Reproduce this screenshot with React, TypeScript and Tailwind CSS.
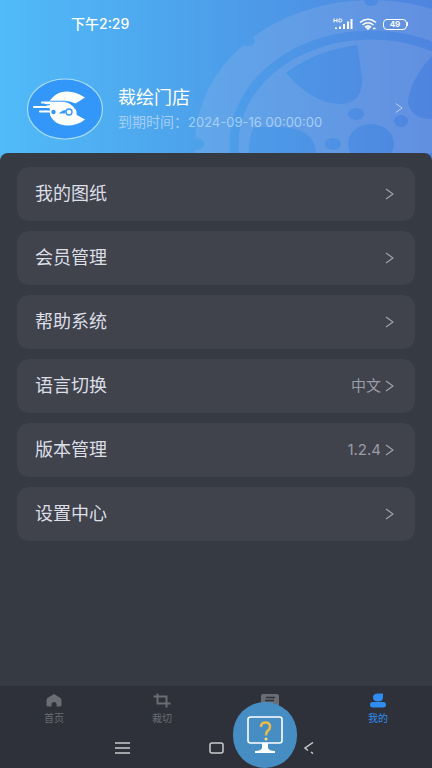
import React, { useState } from "react";

const menuItems = [
  { id: "drawings", label: "我的图纸", value: "" },
  { id: "member", label: "会员管理", value: "" },
  { id: "help", label: "帮助系统", value: "" },
  { id: "language", label: "语言切换", value: "中文" },
  { id: "version", label: "版本管理", value: "1.2.4" },
  { id: "settings", label: "设置中心", value: "" },
];

function Chevron({ className }: { className: string }) {
  return (
    <svg viewBox="0 0 9 12" className={className} fill="none" stroke="currentColor" strokeWidth="1.1" aria-hidden="true">
      <path d="M1 1 L8 6 L1 11" />
    </svg>
  );
}

// Car wheel drawn behind the profile header
function Wheel() {
  return (
    <svg viewBox="0 0 240 153" className="absolute right-0 top-0 w-60" aria-hidden="true">
      <defs>
        <mask id="wheel">
          <ellipse cx="179" cy="144" rx="176" ry="144" fill="#fff" />
          <ellipse cx="179" cy="144" rx="137" ry="109" fill="none" stroke="#000" strokeWidth="9" />
          <g fill="#000">
            <ellipse cx="179" cy="1" rx="7" ry="5" />
            <ellipse cx="56" cy="41" rx="7" ry="5" />
            <ellipse cx="5" cy="144" rx="7" ry="6" />
            <path d="M94 73 Q122 51 165 45 Q168 60 170 80 Q170 104 147 104 Q120 103 94 73 Z" />
            <path d="M57 153 Q57 139 61 128 Q86 124 107 130 Q124 137 124 153 Z" />
            <path d="M240 56 Q218 80 216 102 Q219 119 240 119 Z" />
            <ellipse cx="164" cy="114" rx="8" ry="6" />
            <ellipse cx="209" cy="121" rx="7" ry="6" />
            <ellipse cx="141" cy="144" rx="8" ry="6" />
            <ellipse cx="179" cy="144" rx="23" ry="20" />
          </g>
        </mask>
      </defs>
      <rect width="240" height="153" fill="#b4bee8" fillOpacity="0.2" mask="url(#wheel)" />
    </svg>
  );
}

function Logo() {
  return (
    <svg viewBox="0 0 78 62" className="h-[62px] w-[78px] shrink-0" role="img" aria-label="裁绘">
      <ellipse cx="39" cy="31" rx="37.5" ry="30" fill="#3297f8" stroke="#a9ddfb" strokeWidth="1.2" />
      {/* letter C with the car running through it */}
      <path
        d="M59 19.500 C53 15.500 47 13.500 41 13.500 C33 13.500 27 17.500 23.500 23.500 L24 37 C27 44 34 47.500 41 47.500 C48 47.500 54 45.500 59 41.500 L50 36.500 L26 36 V23.500 H44 L49.500 25.500 Z"
        fill="#fff"
      />
      <path d="M17 24 H38 C43 24.500 47 27.500 49 31 Q51 32 50.500 37 H24 V30 Z" fill="#fff" />
      <path d="M16 24.500 H36 M8 29 H30 M14 33.500 H26" stroke="#fff" strokeWidth="2.200" strokeLinecap="round" />
      <path d="M16 26.700 H24 M12 31.300 H23" stroke="#3297f8" strokeWidth="1" />
      <path d="M24 23.200 H39 Q43 24 47 26" stroke="#3297f8" strokeWidth="0.900" fill="none" />
      <circle cx="27.500" cy="34" r="2.200" fill="#3297f8" />
      <path d="M33 35.500 Q36 32 40 32 L39 35.500 Z" fill="#3297f8" />
      <circle cx="43" cy="34" r="3" fill="#fff" stroke="#3297f8" strokeWidth="1.400" />
    </svg>
  );
}

function StatusIcons() {
  return (
    <div className="flex items-center gap-1.5 text-white">
      <svg viewBox="0 0 20 12" className="h-3 w-5" fill="none" stroke="currentColor" aria-hidden="true">
        <path d="M1 0.500 V4.500 M4 0.500 V4.500 M1 2.500 H4 M6 1 V4 H7.500 Q9 4 9 2.500 Q9 1 7.500 1 Z" />
        <path d="M3 9.500 V11 M7 8.500 V11 M11 6 V11 M15 3.500 V11 M18.500 1 V11" strokeWidth="2" />
      </svg>
      <svg viewBox="0 0 18 12" className="h-3 w-[18px]" fill="none" stroke="currentColor" strokeWidth="1.600" aria-hidden="true">
        <path d="M1 4.500 Q9 -2 17 4.500 M3.500 7 Q9 2.500 14.500 7 M6 9.200 Q9 6.500 12 9.200" />
        <path d="M8 10 L9 11 L10 10 Z M14 10.500 H16.500" />
      </svg>
      <div className="flex items-center">
        <span className="flex h-[11px] w-6 items-center justify-center rounded border border-white text-[8px] font-bold leading-none">
          49
        </span>
        <span className="h-1 w-px bg-white" />
      </div>
    </div>
  );
}

const tabs = [
  {
    id: "home",
    label: "首页",
    icon: <path d="M9 1 L15.500 5 Q16.500 6 16.500 7.500 V12 Q16.500 13.500 15 13.500 H11.500 V11 Q11.500 9 9 9 Q6.500 9 6.500 11 V13.500 H3 Q1.500 13.500 1.500 12 V7.500 Q1.500 6 2.500 5 Z" />,
  },
  {
    id: "crop",
    label: "裁切",
    icon: (
      <path d="M4.500 0.500 V10.500 H17.500 M0.500 3.500 H13.500 V14.500" fill="none" stroke="currentColor" strokeWidth="2" />
    ),
  },
  {
    id: "message",
    label: "消息",
    icon: (
      <>
        <rect x="0" y="1" width="18" height="14" rx="2" />
        <path d="M5 4.500 H14 M4 7.500 H13" stroke="#2e3139" strokeWidth="1.300" />
      </>
    ),
  },
  {
    id: "mine",
    label: "我的",
    icon: (
      <>
        <path d="M4 4.500 Q4 0.500 9 0.500 H14 V4 Q14 8.500 9 8.500 Q4 8.500 4 4.500 Z" />
        <rect x="1" y="9" width="16" height="5.500" rx="2.750" />
      </>
    ),
  },
];

// Round help button that floats over the bottom bars
function HelpBubble() {
  return (
    <button
      type="button"
      aria-label="帮助"
      className="absolute bottom-0 left-[54%] flex h-[66px] w-16 items-center justify-center rounded-full bg-[#468dc4]"
    >
      <svg viewBox="0 0 36 38" className="h-[38px] w-9" fill="none" aria-hidden="true">
        <rect x="1" y="1" width="34" height="26" rx="2.500" stroke="#fff" strokeWidth="1.600" />
        <path d="M15 27 H21 V32 Q22 35 28 35 V37 H8 V35 Q14 35 15 32 Z" fill="#fff" />
        <path d="M14 11 Q14 6.500 18.500 6.500 Q23 6.500 23 11 Q23 13 20.500 15 Q19 16.500 19 19.500" stroke="#e9b949" strokeWidth="2.600" />
        <circle cx="19" cy="23" r="1.500" fill="#f4e36a" />
      </svg>
    </button>
  );
}

export default function App() {
  const [activeTab, setActiveTab] = useState("mine");

  return (
    <div className="flex min-h-screen w-full flex-col bg-[#363a42] font-[Inter,'Noto_Sans_CJK_SC',sans-serif]">
      <header className="relative -mb-2 bg-linear-to-r from-[#50bbf8] via-[#4d9fea] to-[#4e84df] pb-2">
        <Wheel />
        <div className="relative flex h-12 items-center justify-between pl-[71px] pr-6">
          <span className="text-sm leading-5 font-medium text-white">下午2:29</span>
          <StatusIcons />
        </div>
        <button type="button" className="relative flex h-[105px] w-full items-start pl-[26px] pr-[29px] pt-[30px] text-left">
          <Logo />
          <div className="ml-3.5 flex-1 pt-2">
            <p className="text-lg leading-6 text-white">裁绘门店</p>
            <p className="text-sm leading-6 text-[#a5cff8]">
              到期时间：<span className="text-[13px]">2024-09-16 00:00:00</span>
            </p>
          </div>
          <Chevron className="mt-6 h-3 w-2 text-[#b9d3f7]" />
        </button>
      </header>

      <main className="relative flex flex-1 flex-col gap-2.5 rounded-t-lg bg-[#363a42] px-[17px] pb-6 pt-3.5">
        {menuItems.map((item) => (
          <button
            key={item.id}
            type="button"
            className="flex h-[54px] w-full items-center rounded-xl bg-[#40424c] pl-[18px] pr-[21px] text-left"
          >
            <span className="flex-1 text-lg leading-6 text-[#dcdfe6]">{item.label}</span>
            <span className="mr-1 text-[15px] leading-6 text-[#9a9ca6]">{item.value}</span>
            <Chevron className="h-3 w-[9px] text-[#a3a5ae]" />
          </button>
        ))}
      </main>

      <footer className="relative bg-[#2e3139]">
        <nav className="grid h-11 grid-cols-4">
          {tabs.map((tab) => (
            <button
              key={tab.id}
              type="button"
              onClick={() => setActiveTab(tab.id)}
              className={`flex flex-col items-center pt-[7px] ${activeTab === tab.id ? "text-[#2f8cf0]" : "text-[#6b6d75]"}`}
            >
              <svg viewBox="0 0 18 15" className="h-[15px] w-[18px]" fill="currentColor" aria-hidden="true">
                {tab.icon}
              </svg>
              <span className="mt-0.5 text-[10px] leading-4">{tab.label}</span>
            </button>
          ))}
        </nav>
        <div className="flex h-[38px] items-center justify-between px-[115px] pb-0.5 text-[#c9cbd0]">
          <button type="button" aria-label="菜单">
            <svg viewBox="0 0 15 12" className="h-3 w-[15px]" stroke="currentColor" strokeWidth="1.500" aria-hidden="true">
              <path d="M0 1 H15 M0 6 H15 M0 11 H15" />
            </svg>
          </button>
          <button type="button" aria-label="主屏幕">
            <svg viewBox="0 0 15 12" className="h-3 w-[15px]" fill="none" stroke="currentColor" strokeWidth="1.500" aria-hidden="true">
              <rect x="1" y="1" width="13" height="10" rx="2" />
            </svg>
          </button>
          <button type="button" aria-label="返回">
            <svg viewBox="0 0 15 12" className="h-3 w-[15px]" fill="none" stroke="currentColor" strokeWidth="1.500" aria-hidden="true">
              <path d="M11 0.500 L3 6 L6 8.500 M9 10 L11 11.500" />
            </svg>
          </button>
        </div>
        <HelpBubble />
      </footer>
    </div>
  );
}
